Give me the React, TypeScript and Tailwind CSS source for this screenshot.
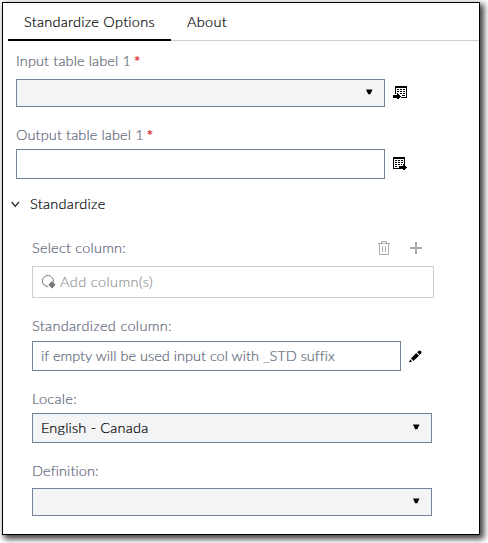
import type { ReactNode } from "react";

function Label({ children, className = "" }: { children: ReactNode; className?: string }) {
  return <div className={`flex items-center text-[#5c6879] ${className}`}>{children}</div>;
}

function Caret() {
  return (
    <svg width="7" height="6" viewBox="0 0 7 6" className="relative -top-px shrink-0">
      <path d="M0 0.5H6.5L4.3 5.2H2.2Z" fill="#000" />
    </svg>
  );
}

function Select({ value, className = "" }: { value?: string; className?: string }) {
  return (
    <div className={`flex items-center justify-between border border-[#76849b] bg-[#f3f4f6] pl-2 text-black ${className}`}>
      <span className="tracking-[0.2px]">{value}</span>
      <Caret />
    </div>
  );
}

function TableIcon({ output = false }: { output?: boolean }) {
  return (
    <svg width="15" height="14" viewBox="0 0 15 14" shapeRendering="crispEdges">
      {output ? (
        <>
          <path d="M0 0H12V8H11V2H1V11H6V12H0Z" />
          <path d="M2 3h2v1H2zM5 3h2v1H5zM8 3h2v1H8zM2 5h2v1H2zM5 5h2v1H5zM8 5h2v1H8zM2 7h2v1H2zM5 7h2v1H5zM2 9h2v1H2zM8 7h1v1H8z" />
          <path d="M6 9H10V7H11V8H12V9H13V10H14V11H13V12H12V13H10V12H6Z" />
        </>
      ) : (
        <>
          <path d="M2 0H14V12H8V11H13V2H3V8H2Z" />
          <path d="M4 3h2v1H4zM7 3h2v1H7zM10 3h2v1H10zM4 5h2v1H4zM7 5h2v1H7zM10 5h2v1H10zM7 7h2v1H7zM10 7h2v1H10zM9 9h3v1H9z" />
          <path d="M0 9H4V7H5V8H6V9H7V10H8V11H7V12H6V13H4V12H0Z" />
        </>
      )}
    </svg>
  );
}

export default function App() {
  return (
    <div className="h-[543px] w-[488px] overflow-hidden bg-white pl-[2px] pt-[2px] font-['Lato','Liberation_Sans',sans-serif] text-[14.5px] font-light leading-[20px] [-webkit-text-stroke:0.2px]">
      <div className="h-[533px] w-[478px] border border-black bg-white shadow-[3px_3px_6px_1px_rgba(0,0,0,0.75)]">
        <div className="ml-[5px] flex h-[38px] border-b border-[#cbced6] text-black">
          <div className="h-[38px] w-[163px] border-b-2 border-black pl-4 pt-[9px] tracking-[0.27px]">Standardize Options</div>
          <div className="pl-4 pt-[9px] tracking-[0.3px]">About</div>
        </div>

        <div className="pl-[13px]">
          <Label className="mt-[10px] h-5 gap-[3px] tracking-[0.13px]">
            Input table label 1<span className="text-[15px] font-normal text-[#dc2626]">*</span>
          </Label>
          <div className="mt-2 flex items-center">
            <Select className="h-7 w-[369px] pr-[11px]" />
            <div className="ml-2"><TableIcon /></div>
          </div>
          <Label className="mt-[18px] h-5 gap-[3px] tracking-[0.13px]">
            Output table label 1<span className="text-[15px] font-normal text-[#dc2626]">*</span>
          </Label>
          <div className="mt-1 flex items-center">
            <div className="h-[30px] w-[369px] border border-[#76849b]" />
            <div className="ml-2"><TableIcon output /></div>
          </div>
        </div>

        <div className="mt-[15px] flex h-5 items-center pl-2 text-black">
          <svg width="9" height="7" viewBox="0 0 9 7" fill="none" stroke="#222" strokeWidth="1.3"><path d="M0.7 1L4.3 5.3L7.9 1" /></svg>
          <span className="ml-[10px] tracking-[0.3px]">Standardize</span>
        </div>

        <div className="pl-[29px]">
          <div className="mt-6 flex h-5 w-[402px] items-center">
            <Label className="grow tracking-[0.22px]">Select column:</Label>
            <svg width="12" height="15" viewBox="0 0 12 15" fill="none" stroke="#aaa" className="relative -top-px mr-[20px]">
              <path d="M0 3.5H12M3.5 3V1.5H8.5V3M1.5 4V14.5H10.5V4M4.5 6V12M7.5 6V12" />
            </svg>
            <svg width="12" height="12" viewBox="0 0 12 12" stroke="#aaa" strokeWidth="2" className="mr-[12px]"><path d="M6 0V12M0 6H12" /></svg>
          </div>
          <div className="mt-2 flex h-8 w-[402px] items-center border border-[#cbced3] pb-px pl-[9px] text-[#969696]">
            <svg width="14" height="14" viewBox="0 0 14 14">
              <path d="M6.2 11.5A5.5 5.5 0 1 1 11.3 7" fill="none" stroke="#777" />
              <path d="M10 6L13.6 9.8L10 13.6L6.4 9.8Z" fill="#777" />
            </svg>
            <span className="ml-1 tracking-[0.4px]">Add column(s)</span>
          </div>
          <Label className="mt-[18px] h-5 tracking-[0.33px]">Standardized column:</Label>
          <div className="mt-[5px] flex items-center">
            <div className="flex h-[30px] w-[369px] items-center border border-[#76849b] pb-px pl-2 tracking-[0.02px] text-[#5c6879]">
              if empty will be used input col with _STD suffix
            </div>
            <svg width="13" height="13" viewBox="0 0 13 13" className="ml-2">
              <path d="M0 12.5L1 9.4L3.2 11.5ZM2 8.4L7.2 3L10 5.8L4.4 11ZM8.1 2.3L9.8 0.7Q10.8 0 11.8 0.9L12.2 1.3Q13 2.3 12.2 3.2L10.7 4.9Z" />
            </svg>
          </div>
          <Label className="mt-[18px] h-5 tracking-[0.3px]">Locale:</Label>
          <Select value="English - Canada" className="mt-1 h-[30px] w-[400px] pr-[11px]" />
          <Label className="mt-[18px] h-5 tracking-[0.1px]">Definition:</Label>
          <Select className="mt-[7px] h-7 w-[400px] pr-[11px]" />
        </div>
      </div>
    </div>
  );
}
